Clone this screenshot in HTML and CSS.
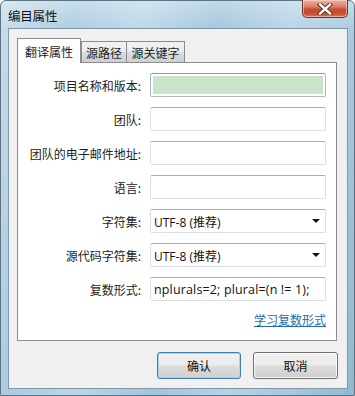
FILE: index.html
```html
<!DOCTYPE html>
<html>
<head>
<meta charset="utf-8">
<link rel="stylesheet" href="styles.css">
</head>
<body>
<div class="window">
  <div class="titlebar">
    <span class="title">编目属性</span>
    <div class="close">
      <svg width="18" height="12" viewBox="0 0 18 12">
        <path d="M4 1.5 L14 10.5 M14 1.5 L4 10.5" stroke="#5a2a22" stroke-width="4.2" stroke-linecap="square"/>
        <path d="M4 1.5 L14 10.5 M14 1.5 L4 10.5" stroke="#ffffff" stroke-width="2.4" stroke-linecap="square"/>
      </svg>
    </div>
  </div>
  <div class="client">
    <div class="tabs">
      <div class="tab active t1">翻译属性</div>
      <div class="tab t2">源路径</div>
      <div class="tab t3">源关键字</div>
    </div>
    <div class="panel">
      <div class="form">
        <label class="lbl">项目名称和版本:</label>
        <div class="field green"><div class="fill"></div></div>
        <label class="lbl">团队:</label>
        <div class="field"></div>
        <label class="lbl">团队的电子邮件地址:</label>
        <div class="field"></div>
        <label class="lbl">语言:</label>
        <div class="field"></div>
        <label class="lbl">字符集:</label>
        <div class="field combo"><span class="val">UTF-8 (推荐)</span><span class="arrow"></span></div>
        <label class="lbl">源代码字符集:</label>
        <div class="field combo"><span class="val">UTF-8 (推荐)</span><span class="arrow"></span></div>
        <label class="lbl">复数形式:</label>
        <div class="field"><span class="val wide">nplurals=2; plural=(n != 1);</span></div>
      </div>
      <div class="linkrow"><a class="link">学习复数形式</a></div>
    </div>
    <div class="buttons">
      <div class="btn default">确认</div>
      <div class="btn">取消</div>
    </div>
  </div>
</div>
</body>
</html>
```

FILE: styles.css
```css
* { box-sizing: border-box; }
html, body { margin: 0; padding: 0; }
body {
  width: 355px;
  height: 396px;
  overflow: hidden;
  font-family: "Noto Sans CJK SC", "Noto Sans", sans-serif;
  font-size: 12px;
  color: #1e1e1e;
}
.window {
  width: 355px;
  height: 396px;
  border: 1px solid #5d7283;
  border-radius: 6px 6px 0 0;
  background:
    linear-gradient(180deg, rgba(255,255,255,0.35) 0px, rgba(255,255,255,0.05) 28px, rgba(255,255,255,0) 60px),
    linear-gradient(100deg, #c7dcea 0%, #a9cbe0 18%, #bcd6e7 34%, #9fc5dc 52%, #b6d3e5 70%, #a4c8de 86%, #8fb9d3 100%);
  display: flex;
  flex-direction: column;
}
.titlebar {
  height: 27px;
  display: flex;
  justify-content: space-between;
  align-items: flex-start;
  padding-left: 7px;
  padding-right: 6px;
}
.title {
  margin-top: 5px;
  font-size: 12.5px;
  color: #111;
  letter-spacing: -0.2px;
}
.close {
  width: 46px;
  height: 18px;
  margin-top: -1px;
  border: 1px solid #6e3127;
  border-top: none;
  border-radius: 0 0 5px 5px;
  background: linear-gradient(180deg, #eab3a6 0%, #dc7d68 40%, #c84a32 55%, #c9502f 80%, #d9775a 100%);
  box-shadow: inset 0 0 0 1px rgba(255,220,210,0.55);
  display: flex;
  align-items: center;
  justify-content: center;
}
.client {
  margin: 0 6px 6px 7px;
  flex: 1;
  border: 1px solid #8396a6;
  background: #f0f0f0;
  padding: 9px 10px 0 8px;
  display: flex;
  flex-direction: column;
}
.tabs {
  display: flex;
  align-items: flex-end;
  height: 24px;
  position: relative;
  z-index: 1;
}
.tab {
  height: 21px;
  border: 1px solid #898c95;
  border-bottom: none;
  background: linear-gradient(180deg, #f2f2f2 0%, #ebebeb 50%, #dddddd 51%, #cfcfcf 100%);
  display: flex;
  align-items: center;
  justify-content: center;
  margin-left: -1px;
  color: #1e1e1e;
}
.tab.active {
  height: 25px;
  margin-bottom: -1px;
  background: #ffffff;
  margin-left: 0;
  z-index: 2;
}
.t1 { width: 64px; }
.t2 { width: 46px; margin-left: 0; }
.t3 { width: 59px; }
.panel {
  height: 279px;
  background: #ffffff;
  border: 1px solid #898c95;
  padding-top: 10px;
}
.form {
  display: grid;
  grid-template-columns: 123px 176px;
  grid-auto-rows: 24px;
  column-gap: 9px;
  row-gap: 10px;
}
.lbl {
  text-align: right;
  align-self: center;
  white-space: nowrap;
  color: #222;
}
.field {
  border: 1px solid #dcdfe6;
  border-top-color: #aaadb3;
  border-radius: 2px;
  background: #fff;
  display: flex;
  align-items: center;
  padding-left: 3px;
}
.field.green {
  border-color: #a9b9c9;
  border-top-color: #8797a8;
  padding: 2px;
}
.fill {
  width: 100%;
  height: 100%;
  background: #c9e5c9;
}
.val {
  font-family: "Open Sans", "Noto Sans CJK SC", sans-serif;
  font-size: 12px;
  color: #111;
  white-space: nowrap;
  letter-spacing: 0;
  padding-top: 1px;
}
.val.wide {
  font-size: 12.5px;
  letter-spacing: 0.15px;
}
.combo {
  justify-content: space-between;
  padding-right: 5px;
}
.arrow {
  width: 0;
  height: 0;
  border-left: 4px solid transparent;
  border-right: 4px solid transparent;
  border-top: 4px solid #111;
}
.linkrow {
  display: flex;
  justify-content: flex-end;
  padding-right: 10px;
  margin-top: 10px;
}
.link {
  color: #1f6bb0;
  text-decoration: underline;
  cursor: pointer;
}
.buttons {
  display: flex;
  justify-content: flex-end;
  gap: 12px;
  margin-top: 11px;
  margin-right: -1px;
}
.btn {
  width: 85px;
  height: 27px;
  border: 1px solid #707070;
  border-radius: 3px;
  background: linear-gradient(180deg, #f2f2f2 0%, #ebebeb 48%, #dddddd 52%, #cfcfcf 100%);
  box-shadow: inset 0 0 0 1px rgba(255,255,255,0.8);
  display: flex;
  align-items: center;
  justify-content: center;
  color: #111;
}
.btn.default {
  width: 84px;
  border-color: #3c7fb1;
  box-shadow: inset 0 0 0 1px #9fd8f5;
}
```
